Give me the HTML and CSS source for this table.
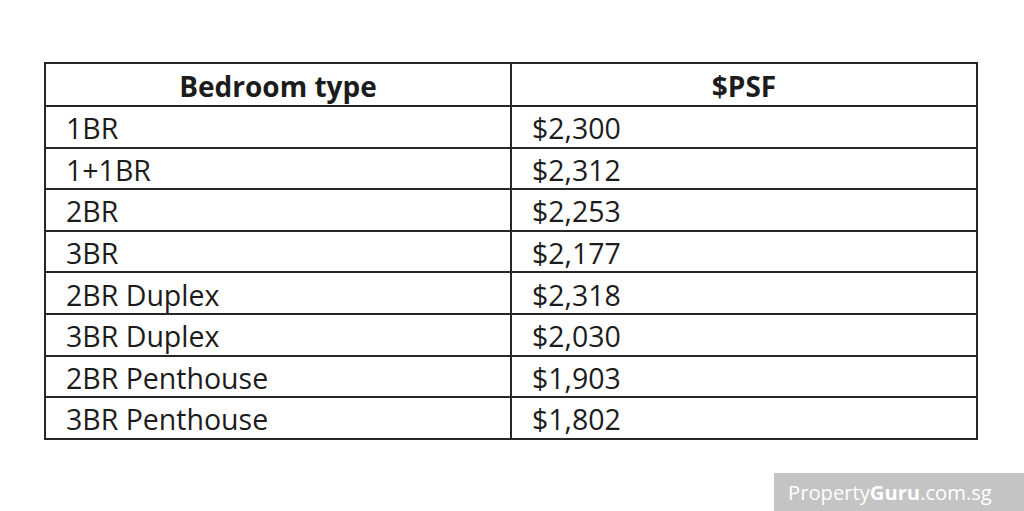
FILE: index.html
```html
<!DOCTYPE html>
<html>
<head>
<meta charset="utf-8">
<link rel="stylesheet" href="styles.css">
</head>
<body>
<div class="page">
  <table class="psf">
    <thead>
      <tr><th>Bedroom type</th><th>$PSF</th></tr>
    </thead>
    <tbody>
      <tr><td>1BR</td><td>$2,300</td></tr>
      <tr><td>1+1BR</td><td>$2,312</td></tr>
      <tr><td>2BR</td><td>$2,253</td></tr>
      <tr><td>3BR</td><td>$2,177</td></tr>
      <tr><td>2BR Duplex</td><td>$2,318</td></tr>
      <tr><td>3BR Duplex</td><td>$2,030</td></tr>
      <tr><td>2BR Penthouse</td><td>$1,903</td></tr>
      <tr><td>3BR Penthouse</td><td>$1,802</td></tr>
    </tbody>
  </table>
  <div class="footer">
    <div class="brand">Property<b>Guru</b>.com.sg</div>
  </div>
</div>
</body>
</html>
```

FILE: styles.css
```css
html, body {
  margin: 0;
  padding: 0;
  background: #fff;
}
.page {
  width: 1024px;
  height: 511px;
  display: flex;
  flex-direction: column;
  padding-top: 62px;
  box-sizing: border-box;
}
.psf {
  margin-left: 44px;
  width: 934px;
  border-collapse: collapse;
  font-family: "Open Sans", sans-serif;
  color: #1c1c1c;
}
.psf th, .psf td {
  border: 2px solid #262626;
  height: 36.6px;
  padding: 3px 0 0 20px;
  font-size: 28.5px;
  line-height: 36px;
  text-align: left;
  vertical-align: middle;
}
.psf th:first-child, .psf td:first-child {
  width: 444px;
}
.psf th {
  text-align: center;
  font-weight: 700;
  font-size: 28px;
  height: 39px;
  padding: 2px 0 0 0;
}
.footer {
  margin-top: auto;
  display: flex;
  justify-content: flex-end;
}
.brand {
  width: 250px;
  height: 38px;
  background: #c4c4c4;
  color: #fff;
  font-family: "Open Sans", sans-serif;
  font-size: 20.2px;
  line-height: 38px;
  padding-left: 14px;
  box-sizing: border-box;
}
.brand b {
  font-weight: 700;
}
```
